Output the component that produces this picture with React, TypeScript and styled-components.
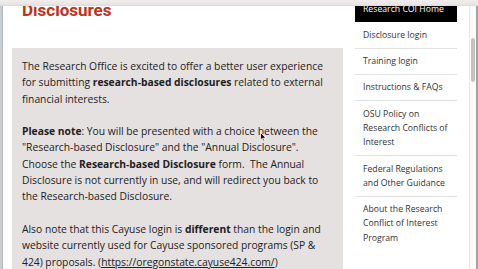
import React from "react";
import styled, { createGlobalStyle } from "styled-components";

const GlobalStyle = createGlobalStyle`
  html, body {
    margin: 0;
    padding: 0;
    width: 478px;
    height: 269px;
    overflow: hidden;
    background: #fff;
  }
`;

const Window = styled.div`
  position: relative;
  display: flex;
  width: 478px;
  height: 269px;
  overflow: hidden;
  background: #fff;
`;

const TopBand = styled.div`
  position: absolute;
  top: 0;
  left: 0;
  right: 0;
  height: 5px;
  background: linear-gradient(#f1eded, #e7e3e4);
  border-bottom: 1px solid #e0dcdc;
  z-index: 5;
`;

const LeftEdge = styled.div`
  flex: none;
  width: 2px;
  background: #c9ced3;
  border-right: 1px solid #b3b9bf;
`;

const RightEdge = styled.div`
  flex: none;
  width: 2px;
  background: #9ea3a8;
`;

const ScrollTrack = styled.div`
  flex: none;
  width: 6px;
  background: #fbfbfb;
  border-left: 1px solid #e6e6e6;
  display: flex;
  flex-direction: column;
`;

const ScrollThumb = styled.div`
  margin: 38px 0 0 1px;
  width: 4px;
  height: 44px;
  border-radius: 2px;
  background: #c3c3c3;
`;

const Page = styled.div`
  flex: 1;
  display: flex;
  align-items: flex-start;
  gap: 12px;
  margin-top: -5px;
  padding: 0 12px 0 9px;
`;

const Main = styled.main`
  flex: none;
  width: 331px;
  padding-top: 5px;
`;

const Heading = styled.h1`
  margin: 0 0 28px 10px;
  font: 700 17px/20px Roboto, "Liberation Sans", sans-serif;
  color: #bf321b;
`;

const InfoBox = styled.section`
  background: #e5e1e0;
  padding: 10px 10px 0;
  font-family: "Open Sans", "Liberation Sans", sans-serif;
  font-size: 10.3px;
  line-height: 16.3px;
  color: #222;
  min-height: 260px;

  p {
    margin: 0 0 16.3px;
  }

  b {
    font-weight: 700;
  }

  a {
    color: #222;
    text-decoration: underline;
  }
`;

const Sidebar = styled.nav`
  flex: none;
  width: 102px;
  display: flex;
  flex-direction: column;
  margin-top: 1px;
`;

const NavItem = styled.div<{ $active?: boolean }>`
  padding: 5.5px 8px;
  font-family: "Open Sans", "Liberation Sans", sans-serif;
  font-size: 8.7px;
  line-height: 14.3px;
  color: ${(p) => (p.$active ? "#fff" : "#333")};
  background: ${(p) => (p.$active ? "#000" : "transparent")};
  border-bottom: 1px solid ${(p) => (p.$active ? "#000" : "#e3e3e3")};

  &:last-child {
    border-bottom: none;
  }
`;

const Cursor = styled.svg`
  position: absolute;
  left: 260px;
  top: 132px;
  z-index: 6;
`;

const navItems = [
  "Research COI Home",
  "Disclosure login",
  "Training login",
  "Instructions & FAQs",
  "OSU Policy on Research Conflicts of Interest",
  "Federal Regulations and Other Guidance",
  "About the Research Conflict of Interest Program",
];

export default function App() {
  return (
    <>
      <GlobalStyle />
      <Window>
        <TopBand />
        <LeftEdge />
        <Page>
          <Main>
            <Heading>Disclosures</Heading>
            <InfoBox>
              <p>
                The Research Office is excited to offer a better user experience
                for submitting <b>research-based disclosures</b> related to
                external financial interests.
              </p>
              <p>
                <b>Please note</b>: You will be presented with a choice between
                the "Research-based Disclosure" and the "Annual Disclosure".
                Choose the <b>Research-based Disclosure</b> form.&nbsp; The
                Annual Disclosure is not currently in use, and will redirect you
                back to the Research-based Disclosure.
              </p>
              <p>
                Also note that this Cayuse login is <b>different</b> than the
                login and website currently used for Cayuse sponsored programs
                (SP &amp; 424) proposals.{" "}
                (<a href="#">https://oregonstate.cayuse424.com/</a>)
              </p>
            </InfoBox>
          </Main>
          <Sidebar>
            {navItems.map((t, i) => (
              <NavItem key={t} $active={i === 0}>
                {t}
              </NavItem>
            ))}
          </Sidebar>
        </Page>
        <ScrollTrack>
          <ScrollThumb />
        </ScrollTrack>
        <RightEdge />
        <Cursor width="7" height="10" viewBox="0 0 7 10">
          <path d="M0.5 0.5 L0.5 8 L2.3 6.4 L3.6 9.3 L4.7 8.8 L3.5 6 L6 6 Z" fill="#111" stroke="#fff" strokeWidth="0.8" />
        </Cursor>
      </Window>
    </>
  );
}
